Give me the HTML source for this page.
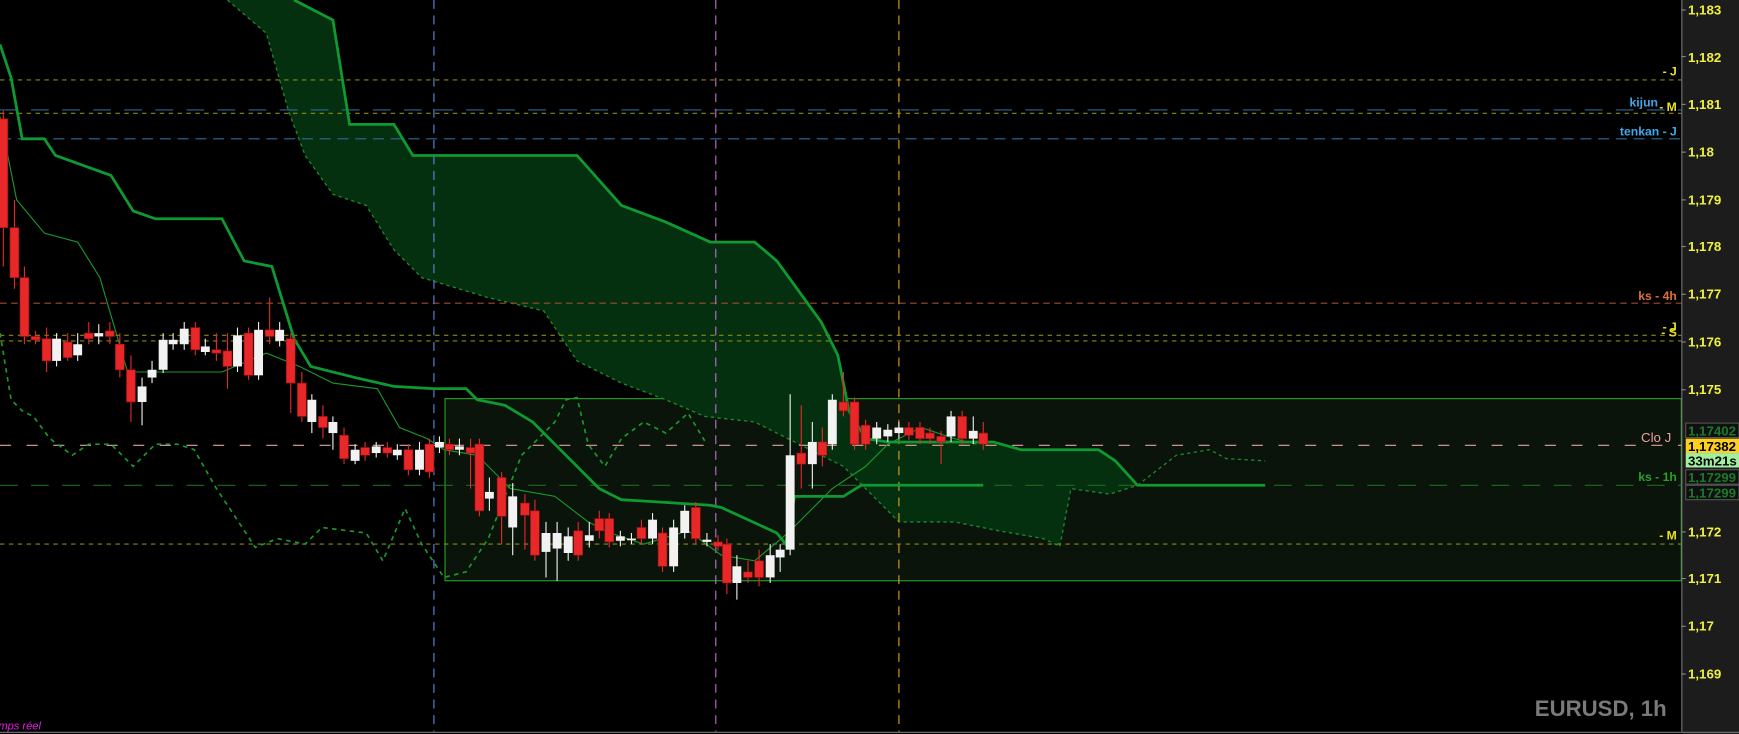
<!DOCTYPE html>
<html><head><meta charset="utf-8"><style>
html,body{margin:0;padding:0;background:#000;overflow:hidden}
svg{display:block}
text{font-family:"Liberation Sans",sans-serif}
</style></head><body>
<svg id="s" width="1739" height="734" viewBox="0 0 1567 661" preserveAspectRatio="none" xmlns="http://www.w3.org/2000/svg">
<rect width="1567" height="661" fill="#000"/>
<rect x="401" y="359" width="1114" height="164" fill="#0a140a" stroke="#2aa02a" stroke-width="1"/>
<path d="M205,0 L265,0 L300,18 L315,112 L355,112 L372,140 L520,140 L560,185 L600,200 L640,218 L680,218 L700,235 L740,290 L755,320 L765,370 L780,395 L800,398 L895,398 L920,405 L990,405 L1005,415 L1025,437 L1000,445 L965,440 L955,492 L940,485 L900,478 L860,470 L810,470 L780,440 L760,420 L720,400 L680,380 L635,375 L600,360 L560,345 L520,325 L490,280 L440,268 L380,250 L355,225 L330,185 L300,175 L275,140 L260,100 L240,30 Z" fill="#05300f"/>
<path d="M1025,437 L1060,410 L1090,405 L1105,413 L1140,415" fill="none" stroke="#1a8a2a" stroke-width="1.2" stroke-dasharray="3,3"/>
<path d="M205,0 L240,30 L260,100 L275,140 L300,175 L330,185 L355,225 L380,250 L440,268 L490,280 L520,325 L560,345 L600,360 L635,375 L680,380 L720,400 L760,420 L780,440 L810,470 L860,470 L900,478 L940,485 L955,492 L965,440 L1000,445 L1025,437" fill="none" stroke="#1a8a2a" stroke-width="1.2" stroke-dasharray="3,3"/>
<g stroke-width="1" fill="none">
<line x1="0" y1="72" x2="1515" y2="72" stroke="#8a8a10" stroke-dasharray="4,4"/>
<line x1="0" y1="99" x2="1515" y2="99" stroke="#2a6a9a" stroke-dasharray="16,12"/>
<line x1="0" y1="102" x2="1515" y2="102" stroke="#8a8a10" stroke-dasharray="4,4"/>
<line x1="0" y1="125" x2="1515" y2="125" stroke="#2a6a9a" stroke-dasharray="10,6"/>
<line x1="0" y1="273" x2="1515" y2="273" stroke="#a04a2a" stroke-dasharray="6,4"/>
<line x1="0" y1="302" x2="1515" y2="302" stroke="#8a8a10" stroke-dasharray="4,4"/>
<line x1="0" y1="307" x2="1515" y2="307" stroke="#8a8a10" stroke-dasharray="4,4"/>
<line x1="0" y1="401" x2="1515" y2="401" stroke="#e8a0a0" stroke-dasharray="10,14"/>
<line x1="0" y1="437" x2="1515" y2="437" stroke="#1e6a1e" stroke-dasharray="16,12"/>
<line x1="0" y1="490" x2="1515" y2="490" stroke="#8a8a10" stroke-dasharray="4,4"/>
<line x1="391" y1="0" x2="391" y2="659" stroke="#5a8ae8" stroke-dasharray="8,6"/>
<line x1="645" y1="0" x2="645" y2="659" stroke="#c070d0" stroke-dasharray="8,6"/>
<line x1="810" y1="0" x2="810" y2="659" stroke="#e0a020" stroke-dasharray="8,6"/>
</g>
<path d="M0,300 L10,360 L20,370 L30,375 L45,395 L65,410 L80,400 L100,400 L120,420 L140,400 L160,400 L175,405 L195,440 L215,470 L230,493 L250,485 L275,490 L290,475 L330,480 L345,505 L365,458 L380,490 L400,520 L420,515 L440,485 L470,410 L490,390 L500,380 L510,360 L520,358 L530,400 L545,420 L560,395 L580,380 L600,390 L620,372 L635,397" fill="none" stroke="#1a9a2a" stroke-width="1.5" stroke-dasharray="4,4"/>
<path d="M0,105 L15,180 L40,210 L70,218 L90,250 L115,335 L200,335 L240,318 L270,330 L300,345 L340,350 L360,385 L385,395 L400,405 L430,410 L460,440 L500,447 L530,470 L550,480 L580,490 L620,478 L650,500 L680,505 L710,480 L750,440 L780,420 L800,400 L830,385 L860,395 L880,400" fill="none" stroke="#1a9a2a" stroke-width="1"/>
<path d="M0,40 L10,70 L20,125 L40,125 L50,140 L100,158 L120,190 L140,197 L200,197 L220,235 L245,240 L265,305 L280,330 L320,340 L355,348 L390,350 L420,350 L430,360 L455,365 L480,380 L500,400 L540,440 L560,450 L640,455 L650,457 L700,480 L708,490 L716,447 L760,447 L776,437 L886,437" fill="none" stroke="#0e9a30" stroke-width="2.5"/>
<path d="M265,0 L300,18 L315,112 L355,112 L372,140 L520,140 L560,185 L600,200 L640,218 L680,218 L700,235 L740,290 L755,320 L765,370 L780,395 L800,398 L895,398 L920,405 L990,405 L1005,415 L1025,437 L1140,437" fill="none" stroke="#0e9a30" stroke-width="2.5"/>
<g id="c"></g>
<g font-size="11" font-weight="bold" text-anchor="end">
<text x="1511" y="68" fill="#e8e020">- J</text>
<text x="1494" y="96" fill="#40a8e8">kijun</text>
<text x="1511" y="100" fill="#e8e020">- M</text>
<text x="1511" y="122" fill="#40a8e8">tenkan - J</text>
<text x="1511" y="270" fill="#e07040">ks - 4h</text>
<text x="1511" y="298" fill="#e8e020">- J</text>
<text x="1511" y="303" fill="#e8e020">- S</text>
<text x="1506" y="398" fill="#f0a0a0" font-weight="normal" font-size="12">Clo J</text>
<text x="1511" y="433" fill="#2aa02a">ks - 1h</text>
<text x="1511" y="486" fill="#e8e020">- M</text>
</g>
<rect x="1516" y="0" width="51" height="661" fill="#1c1c1c"/>
<line x1="1515.5" y1="0" x2="1515.5" y2="659" stroke="#777"/>
<line x1="0" y1="659.5" x2="1567" y2="659.5" stroke="#777"/>
<g font-size="12" font-weight="bold" fill="#f0f040">
<text x="1521" y="13">1,183</text><text x="1521" y="56">1,182</text><text x="1521" y="98">1,181</text>
<text x="1521" y="141">1,18</text><text x="1521" y="184">1,179</text><text x="1521" y="226">1,178</text>
<text x="1521" y="269">1,177</text><text x="1521" y="312">1,176</text><text x="1521" y="355">1,175</text>
<text x="1521" y="483">1,172</text><text x="1521" y="525">1,171</text><text x="1521" y="568">1,17</text>
<text x="1521" y="611">1,169</text>
</g>
<g stroke="#888"><line x1="1515" y1="9" x2="1519" y2="9"/><line x1="1515" y1="51" x2="1519" y2="51"/><line x1="1515" y1="94" x2="1519" y2="94"/><line x1="1515" y1="137" x2="1519" y2="137"/><line x1="1515" y1="180" x2="1519" y2="180"/><line x1="1515" y1="222" x2="1519" y2="222"/><line x1="1515" y1="265" x2="1519" y2="265"/><line x1="1515" y1="308" x2="1519" y2="308"/><line x1="1515" y1="351" x2="1519" y2="351"/><line x1="1515" y1="479" x2="1519" y2="479"/><line x1="1515" y1="521" x2="1519" y2="521"/><line x1="1515" y1="564" x2="1519" y2="564"/><line x1="1515" y1="607" x2="1519" y2="607"/></g>
<rect x="1519" y="381" width="48" height="13" fill="#101010" stroke="#555"/>
<text x="1521" y="392" font-size="12" font-weight="bold" fill="#1a7a2a">1,17402</text>
<rect x="1519" y="395" width="48" height="13" fill="#ffd020"/>
<text x="1521" y="406" font-size="12" font-weight="bold" fill="#000">1,17382</text>
<rect x="1519" y="408" width="48" height="13" fill="#a0f0a0"/>
<text x="1521" y="419" font-size="12" font-weight="bold" fill="#000">33m21s</text>
<rect x="1519" y="423" width="48" height="13" fill="#101010" stroke="#555"/>
<text x="1521" y="434" font-size="12" font-weight="bold" fill="#1a7a2a">1,17299</text>
<rect x="1519" y="437" width="48" height="13" fill="#101010" stroke="#555"/>
<text x="1521" y="448" font-size="12" font-weight="bold" fill="#1a7a2a">1,17299</text>
<text x="1383" y="645" font-size="20" font-weight="bold" fill="#7a7a7a">EURUSD, 1h</text>
<text x="-7" y="657" font-size="10" font-style="italic" fill="#e020e0">emps réel</text>
</svg>
<script>
var d=[[3,107,205,100,240,'r'],[13,205,250,180,260,'r'],[22,250,303,240,310,'r'],[32,303,306,298,310,'r'],[42,305,325,295,335,'r'],[51,305,325,300,330,'w'],[61,308,322,300,325,'r'],[70,310,320,300,325,'w'],[80,300,305,290,310,'r'],[89,300,303,292,310,'w'],[99,298,303,290,310,'r'],[108,310,333,300,340,'r'],[118,333,362,320,380,'r'],[128,348,362,340,383,'w'],[137,333,340,325,345,'w'],[147,306,333,300,336,'w'],[156,306,310,300,315,'w'],[166,296,310,290,315,'w'],[176,295,315,290,320,'r'],[185,312,317,305,320,'w'],[195,315,318,300,325,'r'],[205,316,330,300,350,'r'],[214,302,330,295,335,'w'],[224,300,338,295,342,'r'],[233,297,338,290,342,'w'],[243,297,303,268,310,'r'],[252,297,307,290,312,'w'],[262,305,345,300,372,'r'],[272,345,375,335,380,'r'],[281,360,380,355,390,'w'],[291,375,385,365,395,'r'],[300,380,390,375,405,'w'],[310,392,413,385,418,'r'],[320,405,415,400,418,'w'],[329,403,410,398,415,'r'],[339,402,408,398,412,'w'],[349,403,408,398,412,'r'],[358,405,410,400,414,'w'],[368,405,423,400,428,'r'],[378,405,423,398,428,'w'],[387,400,425,395,430,'r'],[396,398,403,393,408,'w'],[405,400,405,395,410,'r'],[414,402,405,395,410,'w'],[424,403,408,395,440,'r'],[432,400,460,395,465,'r'],[441,443,449,430,460,'w'],[452,430,465,425,490,'r'],[462,447,475,435,500,'w'],[473,453,464,445,495,'r'],[482,460,500,450,505,'r'],[492,480,497,470,520,'w'],[502,480,494,470,523,'w'],[512,483,498,475,505,'w'],[521,478,500,470,505,'r'],[531,482,487,470,493,'w'],[540,467,478,460,485,'r'],[549,467,488,462,493,'r'],[559,483,487,478,492,'w'],[569,485,486,480,490,'w'],[578,475,485,468,490,'r'],[588,468,485,462,490,'w'],[597,480,510,475,515,'r'],[607,475,510,468,515,'w'],[617,460,480,455,485,'w'],[627,457,485,452,490,'r'],[637,486,488,480,492,'w'],[647,488,492,482,496,'r'],[655,490,525,485,535,'r'],[664,510,525,500,540,'w'],[674,515,520,505,525,'r'],[684,505,520,495,528,'r'],[694,500,520,490,525,'w'],[703,495,502,490,515,'w'],[712,410,495,355,500,'w'],[722,408,418,365,440,'r'],[732,398,418,380,440,'w'],[741,398,410,385,420,'r'],[750,360,400,355,405,'w'],[760,362,370,335,375,'r'],[770,362,400,358,405,'r'],[780,383,400,378,405,'r'],[790,385,395,380,400,'w'],[800,387,393,382,398,'w'],[810,385,390,380,395,'w'],[819,385,392,380,396,'r'],[829,385,395,380,400,'r'],[838,390,395,385,400,'r'],[848,393,398,388,418,'r'],[857,375,393,370,398,'w'],[867,375,395,370,400,'r'],[877,388,395,375,400,'w'],[886,390,400,380,405,'r']];
var g=document.getElementById('c'),h='';
d.forEach(function(c){var col=c[5]=='r'?'#e82828':'#f2f2f2';
h+='<line x1="'+c[0]+'" y1="'+c[3]+'" x2="'+c[0]+'" y2="'+c[4]+'" stroke="'+col+'" stroke-width="1"/>';
h+='<rect x="'+(c[0]-4)+'" y="'+c[1]+'" width="8" height="'+Math.max(1.5,c[2]-c[1])+'" fill="'+col+'"'+(c[5]=='r'?' stroke="#a01010" stroke-width="0.6"':'')+'/>';});
g.innerHTML=h;
</script>
</body></html>
